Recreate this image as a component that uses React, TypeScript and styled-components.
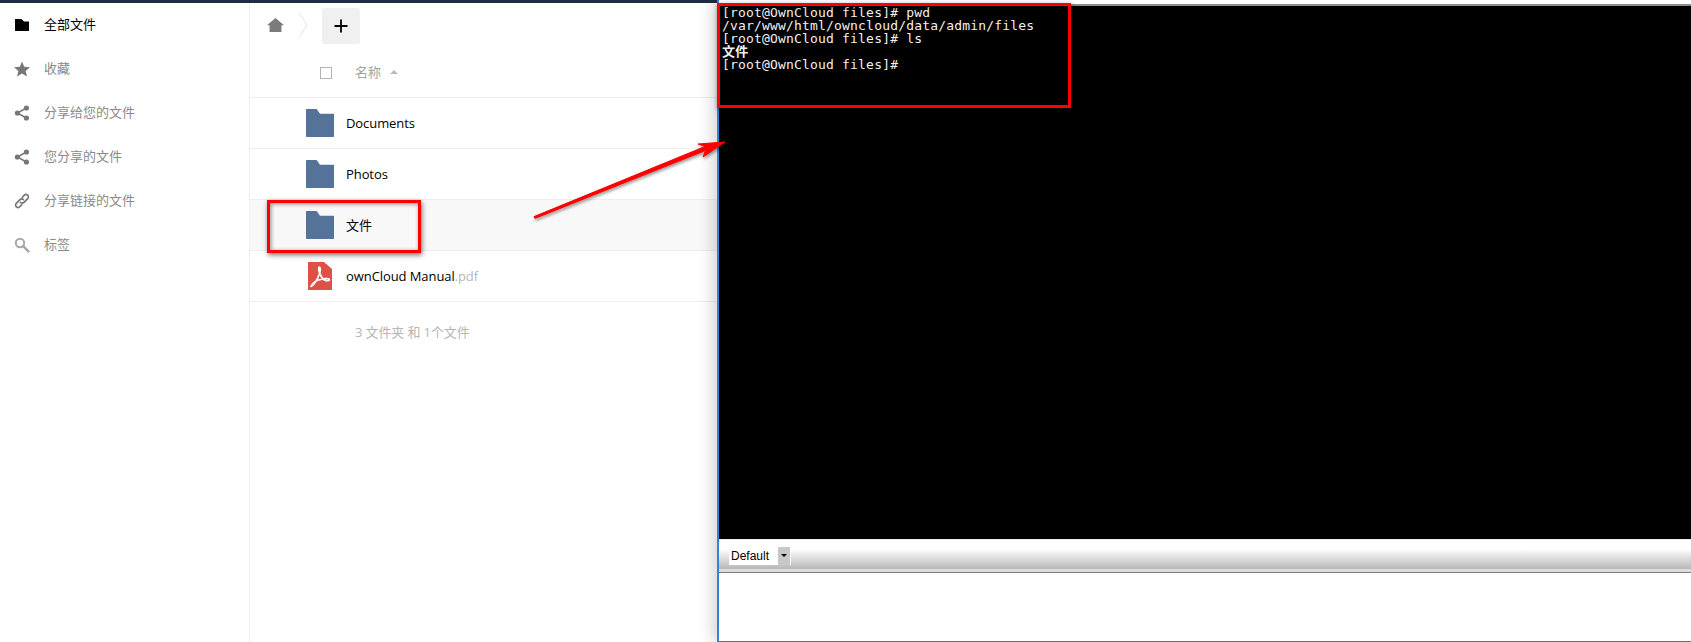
import styled, { createGlobalStyle } from "styled-components";

const GlobalStyle = createGlobalStyle`
  html, body {
    margin: 0;
    padding: 0;
    background: #fff;
    overflow: hidden;
  }
`;

const Page = styled.div`
  position: relative;
  display: flex;
  width: 1691px;
  height: 642px;
  overflow: hidden;
  font-family: "Open Sans", "Noto Sans CJK SC", sans-serif;
`;

const CloudPage = styled.div`
  width: 717px;
  flex: none;
  display: flex;
  flex-direction: column;
  border-top: 3px solid #1d2d44;
  box-sizing: border-box;
`;

const CloudBody = styled.div`
  flex: 1;
  display: flex;
`;

const Sidebar = styled.nav`
  width: 249px;
  flex: none;
  border-right: 1px solid #eee;
`;

const NavItem = styled.div<{ $active?: boolean }>`
  height: 44px;
  display: flex;
  align-items: center;
  padding-left: 14px;
  gap: 14px;
  font-size: 13px;
  line-height: 42px;
  color: ${(p) => (p.$active ? "#000" : "#8a8a8a")};
`;

const NavIcon = styled.svg`
  width: 16px;
  height: 16px;
  flex: none;
`;

const NavLabel = styled.span`
  margin-top: -2px;
`;

const Main = styled.main`
  flex: 1;
  min-width: 0;
`;

const Controls = styled.div`
  height: 44px;
  display: flex;
  align-items: center;
  padding-left: 17px;
`;

const HomeIcon = styled.svg`
  width: 17px;
  height: 16px;
  margin-right: 14px;
`;

const Crumb = styled.svg`
  width: 10px;
  height: 26px;
  margin-right: 15px;
`;

const AddButton = styled.div`
  width: 38px;
  height: 36px;
  border-radius: 3px;
  background: #f0f0f0;
  display: flex;
  align-items: center;
  justify-content: center;
  margin-top: 2px;
  margin-left: -1px;
`;

const HeaderRow = styled.div`
  height: 50px;
  display: flex;
  align-items: center;
  padding-left: 70px;
  border-bottom: 1px solid #eee;
  font-size: 13px;
  color: #a3a3a3;
`;

const CheckBox = styled.span`
  width: 10px;
  height: 10px;
  border: 1px solid #b3b3b3;
  margin-right: 23px;
  margin-top: 1px;
`;

const HeaderLabel = styled.span`
  margin-top: -2px;
`;

const SortCaret = styled.span`
  width: 0;
  height: 0;
  margin-left: 9px;
  border-left: 4px solid transparent;
  border-right: 4px solid transparent;
  border-bottom: 4px solid #b9b9b9;
`;

const FileRow = styled.div<{ $selected?: boolean }>`
  height: 50px;
  display: flex;
  align-items: center;
  padding-left: 56px;
  border-bottom: 1px solid #eee;
  background: ${(p) => (p.$selected ? "#f8f8f8" : "#fff")};
  font-size: 13px;
  letter-spacing: -0.08px;
  color: #000;
`;

const FileIcon = styled.svg`
  width: 28px;
  height: 28px;
  margin-right: 12px;
  flex: none;
`;

const FileName = styled.span<{ $cjk?: boolean }>`
  margin-top: ${(p) => (p.$cjk ? "-2px" : "0")};
`;

const Extension = styled.span`
  color: #b8b8b8;
`;

const Summary = styled.div`
  padding: 20px 0 0 105px;
  font-size: 13px;
  letter-spacing: -0.12px;
  color: #b5b5b5;
`;

const TerminalWindow = styled.section`
  flex: 1;
  height: 641px;
  display: flex;
  flex-direction: column;
  border-left: 2px solid #2b88d8;
  border-bottom: 2px solid #3d7fb5;
  box-shadow: -5px 0 14px rgba(0, 0, 0, 0.16), 0 1px 0 #b5b5b5;
  background: #fff;
  z-index: 1;
`;

const TitleStrip = styled.div`
  height: 6px;
  flex: none;
  background: linear-gradient(#fff 0 4px, #8c8c8c 4px);
`;

const Terminal = styled.pre`
  height: 533px;
  flex: none;
  margin: 0;
  padding: 0 0 0 3px;
  background: #000;
  color: #f2f2f2;
  font-family: "DejaVu Sans Mono", "Noto Sans CJK SC", monospace;
  font-size: 13px;
  line-height: 13px;
  letter-spacing: 0.18px;
`;

const BoldLine = styled.span`
  font-weight: 700;
`;

const TabBar = styled.div`
  height: 34px;
  flex: none;
  display: flex;
  align-items: flex-start;
  padding: 7px 0 0 10px;
  box-sizing: border-box;
  background: linear-gradient(#ededed 0 1px, #fff 1px, #fff 30%, #b8b8b8 90%, #ddd 90%);
  border-bottom: 1px solid #7a7a7a;
`;

const TabSelect = styled.div`
  width: 62px;
  height: 19px;
  display: flex;
  align-items: center;
  justify-content: space-between;
  background: #fff;
  font-family: "Liberation Sans", sans-serif;
  font-size: 12px;
  color: #000;
  padding-left: 2px;
  box-sizing: border-box;
`;

const TabArrow = styled.span`
  width: 12px;
  height: 18px;
  background: #c8c8c8;
  border-right: 1px solid #fff;
  display: flex;
  align-items: center;
  justify-content: center;
  &::after {
    content: "";
    border-left: 3px solid transparent;
    border-right: 3px solid transparent;
    border-top: 3px solid #000;
  }
`;

const InputArea = styled.div`
  flex: 1;
  background: #fff;
`;

const RedFrame = styled.div<{ $left: number; $top: number; $width: number; $height: number }>`
  position: absolute;
  z-index: 2;
  left: ${(p) => p.$left}px;
  top: ${(p) => p.$top}px;
  width: ${(p) => p.$width}px;
  height: ${(p) => p.$height}px;
  box-sizing: border-box;
  border: 3px solid #ff0000;
  box-shadow: 1px 2px 5px rgba(0, 0, 0, 0.55), inset 1px 1px 4px rgba(0, 0, 0, 0.45);
`;

const ArrowOverlay = styled.svg`
  position: absolute;
  z-index: 2;
  left: 525px;
  top: 130px;
  width: 205px;
  height: 100px;
  overflow: visible;
`;

const FolderGlyph = () => (
  <FileIcon viewBox="0 0 28 24" preserveAspectRatio="none">
    <path
      d="M0.6 0H10.6L14 4H27.4Q28 4 28 4.6V23.4Q28 24 27.4 24H0.6Q0 24 0 23.4V0.6Q0 0 0.6 0Z"
      fill="#557299"
    />
  </FileIcon>
);

const PdfGlyph = () => (
  <FileIcon viewBox="0 0 28 28">
    <path d="M2 0H18L26 7V28H2Z" fill="#dd5147" />
    <path
      d="M5 24.5C8 23 11 18 13.2 12.5C14.3 9.5 14.4 6 13.5 5.2C12.3 4.8 12.3 9 14.5 13C16 16 18 18 20 18.6C22 19 23.8 18.4 23.3 17.3C22.4 16 17 16.5 12.5 18C9.5 19 6.5 21 5 24.5Z"
      fill="none"
      stroke="#fff"
      strokeWidth="1.7"
      strokeLinejoin="round"
    />
  </FileIcon>
);

const ShareGlyph = () => (
  <NavIcon viewBox="0 0 16 16">
    <g fill="#777">
      <circle cx="3.4" cy="8" r="2.6" />
      <circle cx="12.4" cy="3" r="2.6" />
      <circle cx="12.4" cy="13" r="2.6" />
    </g>
    <path d="M12.4 3L3.4 8L12.4 13" fill="none" stroke="#777" strokeWidth="1.5" />
  </NavIcon>
);

const navItems = [
  {
    label: "全部文件",
    active: true,
    icon: (
      <NavIcon viewBox="0 0 16 16">
        <path d="M1 2H7.5L10 4.4H15V14H1Z" fill="#000" />
      </NavIcon>
    ),
  },
  {
    label: "收藏",
    icon: (
      <NavIcon viewBox="0 0 16 16">
        <path d="M8 0.4L10.2 5.7L16 6.2L11.6 10L13 15.6L8 12.6L3 15.6L4.4 10L0 6.2L5.8 5.7Z" fill="#777" />
      </NavIcon>
    ),
  },
  { label: "分享给您的文件", icon: <ShareGlyph /> },
  { label: "您分享的文件", icon: <ShareGlyph /> },
  {
    label: "分享链接的文件",
    icon: (
      <NavIcon viewBox="0 0 16 16">
        <g fill="none" stroke="#777" strokeWidth="1.7" strokeLinecap="round">
          <path d="M6.6 9.4C7.8 10.6 9.2 10.3 10 9.4L13.5 5.8C14.8 4.5 14.6 3 13.6 2.2C12.6 1.3 11.2 1.3 10.2 2.3L8.4 4.1" />
          <path d="M9.4 6.6C8.2 5.4 6.8 5.7 6 6.6L2.5 10.2C1.2 11.5 1.4 13 2.4 13.8C3.4 14.7 4.8 14.7 5.8 13.7L7.6 11.9" />
        </g>
      </NavIcon>
    ),
  },
  {
    label: "标签",
    icon: (
      <NavIcon viewBox="0 0 16 16">
        <circle cx="6" cy="6" r="4.2" fill="none" stroke="#a8a8a8" strokeWidth="2" />
        <path d="M9.2 9.2L14.4 14.4" stroke="#a8a8a8" strokeWidth="2.6" strokeLinecap="round" />
      </NavIcon>
    ),
  },
];

export default function App() {
  return (
    <Page>
      <GlobalStyle />
      <CloudPage>
        <CloudBody>
          <Sidebar>
            {navItems.map((item) => (
              <NavItem key={item.label} $active={item.active}>
                {item.icon}
                <NavLabel>{item.label}</NavLabel>
              </NavItem>
            ))}
          </Sidebar>
          <Main>
            <Controls>
              <HomeIcon viewBox="0 0 16 16" preserveAspectRatio="none">
                <path d="M8 1L16 8.2H13.6V15H2.4V8.2H0Z" fill="#7b7b7b" />
              </HomeIcon>
              <Crumb viewBox="0 0 10 26">
                <path d="M1 0.5L9 13L1 25.5" fill="none" stroke="#e2e2e2" strokeWidth="1" />
              </Crumb>
              <AddButton>
                <svg width="14" height="14" viewBox="0 0 14 14">
                  <path d="M7 0.5V13.5M0.5 7H13.5" stroke="#000" strokeWidth="1.8" />
                </svg>
              </AddButton>
            </Controls>
            <HeaderRow>
              <CheckBox />
              <HeaderLabel>名称</HeaderLabel>
              <SortCaret />
            </HeaderRow>
            <FileRow>
              <FolderGlyph />
              <FileName>Documents</FileName>
            </FileRow>
            <FileRow>
              <FolderGlyph />
              <FileName>Photos</FileName>
            </FileRow>
            <FileRow $selected>
              <FolderGlyph />
              <FileName $cjk>文件</FileName>
            </FileRow>
            <FileRow>
              <PdfGlyph />
              <FileName>
                ownCloud Manual<Extension>.pdf</Extension>
              </FileName>
            </FileRow>
            <Summary>3 文件夹 和 1个文件</Summary>
          </Main>
        </CloudBody>
      </CloudPage>

      <TerminalWindow>
        <TitleStrip />
        <Terminal>
          {"[root@OwnCloud files]# pwd\n/var/www/html/owncloud/data/admin/files\n[root@OwnCloud files]# ls\n"}
          <BoldLine>文件</BoldLine>
          {"\n[root@OwnCloud files]#"}
        </Terminal>
        <TabBar>
          <TabSelect>
            Default
            <TabArrow />
          </TabSelect>
        </TabBar>
        <InputArea />
      </TerminalWindow>

      <RedFrame $left={267} $top={200} $width={154} $height={53} />
      <RedFrame $left={717} $top={3} $width={354} $height={105} />
      <ArrowOverlay viewBox="0 0 205 100">
        <defs>
          <filter id="arrow-shadow" x="-10%" y="-30%" width="120%" height="170%">
            <feDropShadow dx="1" dy="2" stdDeviation="1.5" floodColor="#000" floodOpacity="0.4" />
          </filter>
        </defs>
        <g filter="url(#arrow-shadow)">
          <path
            d="M9 86.6L180 16.5L173 14L200 12L178 27L180.5 20.5L10 88.4Z"
            fill="#ff0000"
            stroke="#ff0000"
            strokeWidth="1"
            strokeLinejoin="round"
          />
        </g>
      </ArrowOverlay>
    </Page>
  );
}
